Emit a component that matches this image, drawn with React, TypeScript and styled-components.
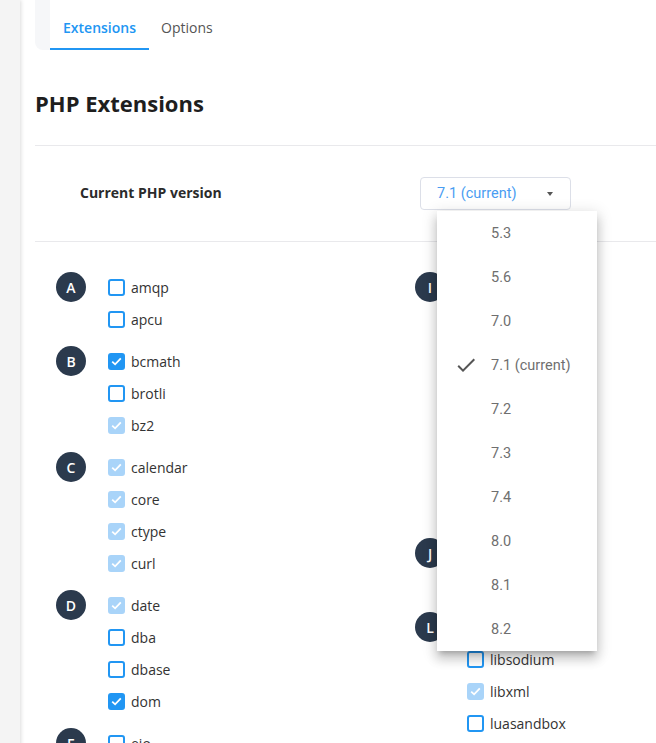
import React from 'react';
import styled, { createGlobalStyle } from 'styled-components';

const GlobalStyle = createGlobalStyle`
  html, body {
    margin: 0;
    padding: 0;
    background: #ffffff;
    overflow: hidden;
  }
  body {
    font-family: 'Open Sans', 'Liberation Sans', sans-serif;
    color: #333;
  }
`;

const Layout = styled.div`
  display: flex;
  min-height: 100vh;
`;

const Sidebar = styled.div`
  width: 20px;
  flex-shrink: 0;
  background: #f4f4f4;
  box-shadow: 1px 0 4px rgba(0, 0, 0, 0.14);
  z-index: 1;
`;

const Main = styled.main`
  flex: 1;
  min-width: 0;
  padding-left: 15px;
`;

const TabBar = styled.div`
  display: flex;
  height: 50px;
  padding-left: 15px;
  background: #f6f7f9;
  border-radius: 0 0 0 8px;
`;

const TabList = styled.div`
  flex: 1;
  display: flex;
  background: #fff;
`;

const Tab = styled.div<{ $active?: boolean }>`
  display: flex;
  align-items: center;
  padding: 5px 13px 0 13px;
  font-size: 14px;
  font-weight: ${(p) => (p.$active ? 600 : 400)};
  color: ${(p) => (p.$active ? '#2196f3' : '#555')};
  box-shadow: ${(p) => (p.$active ? 'inset 0 -2px 0 #2196f3' : 'none')};
  cursor: pointer;

  & + & {
    padding-left: 12px;
  }
`;

const Title = styled.h1`
  margin: 38px 0 27px;
  font-size: 22px;
  line-height: 30px;
  font-weight: 700;
  color: #1e1e1e;
`;

const VersionRow = styled.div`
  display: flex;
  align-items: center;
  height: 95px;
  padding-left: 45px;
  border-top: 1px solid #e9e9ec;
  border-bottom: 1px solid #e9e9ec;
`;

const VersionLabel = styled.div`
  width: 340px;
  margin-top: -2px;
  font-size: 14px;
  font-weight: 700;
  color: #2b2b2b;
`;

const SelectWrap = styled.div`
  position: relative;
`;

const SelectBox = styled.div`
  display: flex;
  align-items: center;
  justify-content: space-between;
  box-sizing: border-box;
  width: 151px;
  height: 33px;
  padding: 0 17px 0 16px;
  border: 1px solid #dcdfe8;
  border-radius: 4px;
  font-family: Roboto, 'Liberation Sans', sans-serif;
  font-size: 14.5px;
  color: #4a9df2;
`;

const Caret = styled.span`
  width: 0;
  height: 0;
  border-left: 3.5px solid transparent;
  border-right: 3.5px solid transparent;
  border-top: 4px solid #555;
`;

const Menu = styled.ul`
  position: absolute;
  top: 34px;
  left: 17px;
  width: 160px;
  margin: 0;
  padding: 0;
  list-style: none;
  background: #fff;
  z-index: 5;
  box-shadow: 0 5px 5px -3px rgba(0, 0, 0, 0.2), 0 8px 10px 1px rgba(0, 0, 0, 0.14),
    0 3px 14px 2px rgba(0, 0, 0, 0.12);
`;

const MenuItem = styled.li`
  display: flex;
  align-items: center;
  height: 44px;
  font-family: Roboto, 'Liberation Sans', sans-serif;
  font-size: 14.5px;
  color: #6f6f6f;
`;

const CheckSlot = styled.span`
  display: flex;
  align-items: center;
  justify-content: center;
  width: 54px;
  padding-left: 4px;
  box-sizing: border-box;
`;

const ExtensionGrid = styled.div`
  display: grid;
  grid-template-columns: 359px 359px;
  padding: 29px 0 0 21px;
`;

const Column = styled.div`
  display: flex;
  flex-direction: column;
  gap: 10px;
`;

const Group = styled.div`
  display: flex;
  align-items: flex-start;
`;

const Letter = styled.div`
  width: 30px;
  height: 30px;
  margin-top: 1px;
  border-radius: 50%;
  background: #2b3a4d;
  color: #fff;
  font-size: 14px;
  font-weight: 600;
  display: flex;
  align-items: center;
  justify-content: center;
  flex-shrink: 0;
`;

const ItemList = styled.div`
  display: flex;
  flex-direction: column;
  margin-left: 22px;
`;

const Item = styled.label`
  display: flex;
  align-items: center;
  height: 32px;
  gap: 6px;
  font-size: 14px;
  color: #333;
`;

const Box = styled.span<{ $state: 'off' | 'on' | 'locked' }>`
  box-sizing: border-box;
  width: 17px;
  height: 17px;
  border-radius: 3px;
  display: flex;
  align-items: center;
  justify-content: center;
  border: 2px solid
    ${(p) => (p.$state === 'locked' ? '#a9d4f9' : '#2196f3')};
  background: ${(p) =>
    p.$state === 'on' ? '#2196f3' : p.$state === 'locked' ? '#a9d4f9' : '#fff'};
`;

type State = 'off' | 'on' | 'locked';
type Ext = [string, State];

const leftGroups: [string, Ext[]][] = [
  ['A', [['amqp', 'off'], ['apcu', 'off']]],
  ['B', [['bcmath', 'on'], ['brotli', 'off'], ['bz2', 'locked']]],
  ['C', [['calendar', 'locked'], ['core', 'locked'], ['ctype', 'locked'], ['curl', 'locked']]],
  ['D', [['date', 'locked'], ['dba', 'off'], ['dbase', 'off'], ['dom', 'on']]],
  ['E', [['eio', 'off'], ['enchant', 'off'], ['exif', 'on']]],
];

const rightGroups: [string, Ext[]][] = [
  [
    'I',
    [
      ['iconv', 'locked'],
      ['igbinary', 'off'],
      ['imagick', 'off'],
      ['imap', 'off'],
      ['inotify', 'off'],
      ['interbase', 'off'],
      ['intl', 'on'],
      ['ioncube_loader', 'off'],
    ],
  ],
  ['J', [['json', 'locked'], ['jsmin', 'off']]],
  ['L', [['ldap', 'off'], ['libsodium', 'off'], ['libxml', 'locked'], ['luasandbox', 'off']]],
];

const versions = ['5.3', '5.6', '7.0', '7.1 (current)', '7.2', '7.3', '7.4', '8.0', '8.1', '8.2'];

const Tick = () => (
  <svg width="11" height="9" viewBox="0 0 11 9">
    <path d="M1.2 4.6 L4.1 7.3 L9.8 1.4" fill="none" stroke="#fff" strokeWidth="1.8" />
  </svg>
);

const MenuCheck = () => (
  <svg width="24" height="24" viewBox="0 0 24 24">
    <path d="M21,7L9,19L3.5,13.5L4.91,12.09L9,16.17L19.59,5.59L21,7Z" fill="#555" />
  </svg>
);

const renderColumn = (groups: [string, Ext[]][]) => (
  <Column>
    {groups.map(([letter, items]) => (
      <Group key={letter}>
        <Letter>{letter}</Letter>
        <ItemList>
          {items.map(([name, state]) => (
            <Item key={name}>
              <Box $state={state}>{state !== 'off' && <Tick />}</Box>
              {name}
            </Item>
          ))}
        </ItemList>
      </Group>
    ))}
  </Column>
);

const App: React.FC = () => {
  return (
    <>
      <GlobalStyle />
      <Layout>
        <Sidebar />
        <Main>
          <TabBar>
            <TabList>
              <Tab $active>Extensions</Tab>
              <Tab>Options</Tab>
            </TabList>
          </TabBar>
          <Title>PHP Extensions</Title>
          <VersionRow>
            <VersionLabel>Current PHP version</VersionLabel>
            <SelectWrap>
              <SelectBox>
                7.1 (current)
                <Caret />
              </SelectBox>
              <Menu>
                {versions.map((v) => (
                  <MenuItem key={v}>
                    <CheckSlot>{v === '7.1 (current)' && <MenuCheck />}</CheckSlot>
                    {v}
                  </MenuItem>
                ))}
              </Menu>
            </SelectWrap>
          </VersionRow>
          <ExtensionGrid>
            {renderColumn(leftGroups)}
            {renderColumn(rightGroups)}
          </ExtensionGrid>
        </Main>
      </Layout>
    </>
  );
};

export default App;
